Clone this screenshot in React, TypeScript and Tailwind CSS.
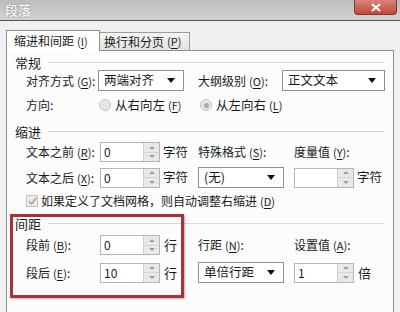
import React from 'react';

const font = { fontFamily: '"Noto Sans CJK SC", "Liberation Sans", sans-serif' };

function Key({ k }: { k: string }) {
  return (
    <span className="ml-[3px] text-[11px]">
      (<span className="underline underline-offset-2">{k}</span>)
    </span>
  );
}

function Combo({ value, w }: { value: string; w: string }) {
  return (
    <div className={`${w} h-[21px] bg-white border border-[#8f8f8f] flex items-center pl-[5px] pr-[8px]`}>
      <span className="flex-1 text-[12.5px] leading-none">{value}</span>
      <svg width="8" height="5" viewBox="0 0 8 5">
        <path d="M0 0h8L4 5z" fill="#111" />
      </svg>
    </div>
  );
}

function Spin({ value }: { value: string }) {
  return (
    <div className="w-[60px] h-[20px] bg-white border border-[#b4b6bd] flex">
      <span className="flex-1 pl-[3px] text-[12px] leading-[18px]">{value}</span>
      <div className="w-[16px] flex flex-col border-l border-[#c9cbd0] bg-[#e9e9ea]">
        <div className="flex-1 flex items-center justify-center border-b border-[#d4d5d8]">
          <svg width="6" height="3" viewBox="0 0 6 3">
            <path d="M0 3h6L3 0z" fill="#9a9ca3" />
          </svg>
        </div>
        <div className="flex-1 flex items-center justify-center">
          <svg width="6" height="3" viewBox="0 0 6 3">
            <path d="M0 0h6L3 3z" fill="#9a9ca3" />
          </svg>
        </div>
      </div>
    </div>
  );
}

function Header({ text }: { text: string }) {
  return (
    <div className="flex items-center h-[16px] pl-[8px] pr-[9px]">
      <span className="text-[13px] leading-none">{text}</span>
      <div className="flex-1 ml-[7px] h-px bg-[#d8d8d8]" />
    </div>
  );
}

function Radio({ checked }: { checked?: boolean }) {
  return (
    <div className="w-[12px] h-[12px] rounded-full border border-[#c6c6c6] bg-[#e6e6e6] flex items-center justify-center">
      {checked && <div className="w-[5px] h-[5px] rounded-full bg-[#a9a9a9]" />}
    </div>
  );
}

export default function App() {
  return (
    <div className="w-[400px] h-[312px] overflow-hidden bg-[#f0f0f0] text-[#1a1a1a] relative" style={font}>
      {/* title bar */}
      <div className="h-[21px] bg-gradient-to-b from-[#bdbdbd] to-[#d3d3d3] flex items-start border-b border-[#555]">
        <span className="ml-[5px] mt-[3px] text-[13px] leading-[14px] text-white [text-shadow:0_0_3px_#888]">段落</span>
        <div className="ml-auto mr-[3px] w-[43px] h-[15px] rounded-b-[4px] bg-gradient-to-b from-[#d8837a] to-[#c0463a] border border-t-0 border-[#7a3a36] flex items-center justify-center">
          <svg width="10" height="9" viewBox="0 0 10 9">
            <path d="M1 1l8 7M9 1L1 8" stroke="#fff" strokeWidth="2.2" />
          </svg>
        </div>
      </div>

      {/* tabs */}
      <div className="flex items-end h-[29px] pl-[6px]">
        <div className="w-[94px] h-[21px] bg-white border border-b-0 border-[#8a8d94] flex items-center pl-[7px] text-[12px] leading-none relative top-px z-10">
          缩进和间距<Key k="I" />
        </div>
        <div className="w-[90px] h-[18px] bg-gradient-to-b from-[#f4f4f4] to-[#e3e3e3] border border-l-0 border-b-0 border-[#9a9ca2] flex items-center pl-[4px] text-[12px] leading-none">
          换行和分页<Key k="P" />
        </div>
      </div>

      {/* panel */}
      <div className="ml-[6px] w-[388px] h-[270px] bg-[#fcfcfc] border border-[#8a8d94] pt-[3px] text-[12px]">
        <Header text="常规" />

        <div className="flex items-center h-[21px] pl-[19px]">
          <span className="w-[72px]">
            对齐方式<Key k="G" />:
          </span>
          <Combo value="两端对齐" w="w-[86px]" />
          <span className="ml-[14px] w-[84px]">
            大纲级别<Key k="O" />:
          </span>
          <Combo value="正文文本" w="w-[103px]" />
        </div>

        <div className="flex items-center h-[20px] mt-[4px] pl-[19px]">
          <span className="w-[73px]">方向:</span>
          <Radio />
          <span className="ml-[4px] w-[85px] text-[12.5px]">
            从右向左<Key k="F" />
          </span>
          <Radio checked />
          <span className="ml-[4px] text-[12.5px]">
            从左向右<Key k="L" />
          </span>
        </div>

        <div className="mt-[8px]">
          <Header text="缩进" />
        </div>

        <div className="flex items-center h-[20px] mt-[3px] pl-[19px]">
          <span className="w-[74px]">
            文本之前<Key k="R" />:
          </span>
          <Spin value="0" />
          <span className="ml-[3px] w-[35px] text-[12.5px]">字符</span>
          <span className="w-[96px]">
            特殊格式<Key k="S" />:
          </span>
          <span>
            度量值<Key k="Y" />:
          </span>
        </div>

        <div className="flex items-center h-[21px] mt-[5px] pl-[19px]">
          <span className="w-[74px]">
            文本之后<Key k="X" />:
          </span>
          <Spin value="0" />
          <span className="ml-[3px] w-[35px] text-[12.5px]">字符</span>
          <Combo value="(无)" w="w-[86px]" />
          <div className="ml-[10px]">
            <Spin value="" />
          </div>
          <span className="ml-[3px] text-[12.5px]">字符</span>
        </div>

        <div className="flex items-center h-[18px] mt-[4px] pl-[19px]">
          <div className="w-[12px] h-[12px] border border-[#c2c2c2] bg-[#ececec] flex items-center justify-center">
            <svg width="9" height="8" viewBox="0 0 9 8">
              <path d="M1 4l2.5 3L8 1" stroke="#a3a3a3" strokeWidth="1.6" fill="none" />
            </svg>
          </div>
          <span className="ml-[3px] text-[12px]">
            如果定义了文档网格，则自动调整右缩进<Key k="D" />
          </span>
        </div>

        <div className="mt-[5px]">
          <Header text="间距" />
        </div>

        <div className="flex items-center h-[20px] mt-[4px] pl-[19px]">
          <span className="w-[74px]">
            段前<Key k="B" />:
          </span>
          <Spin value="0" />
          <span className="ml-[4px] w-[34px] text-[13px]">行</span>
          <span className="w-[96px]">
            行距<Key k="N" />:
          </span>
          <span>
            设置值<Key k="A" />:
          </span>
        </div>

        <div className="flex items-center h-[21px] mt-[7px] pl-[19px]">
          <span className="w-[74px]">
            段后<Key k="E" />:
          </span>
          <Spin value="10" />
          <span className="ml-[4px] w-[34px] text-[13px]">行</span>
          <Combo value="单倍行距" w="w-[86px]" />
          <div className="ml-[10px]">
            <Spin value="1" />
          </div>
          <span className="ml-[4px] text-[13px]">倍</span>
        </div>
      </div>

      {/* red highlight annotation */}
      <div className="absolute left-[10px] top-[214px] w-[174px] h-[84px] border-[3px] border-[#a8323c] shadow-[1px_1px_2px_rgba(0,0,0,0.3)]" />
    </div>
  );
}
